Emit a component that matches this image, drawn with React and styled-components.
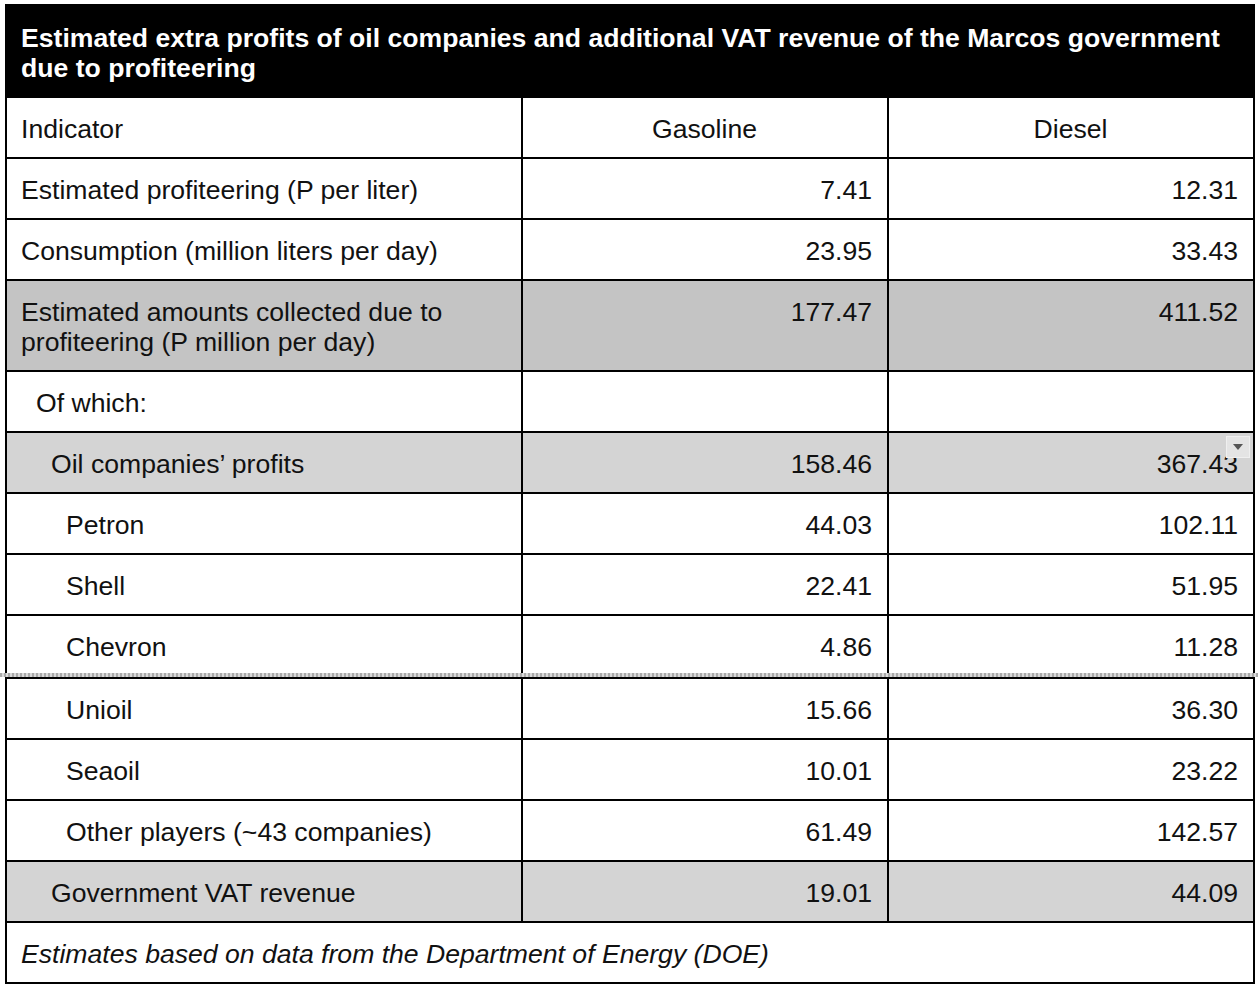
import React from 'react';
import styled, { createGlobalStyle } from 'styled-components';

const GlobalStyle = createGlobalStyle`
  html, body {
    margin: 0;
    padding: 0;
    background: #ffffff;
  }
  body {
    font-family: "Liberation Sans", Arial, Helvetica, sans-serif;
    color: #111111;
  }
`;

const topRows = [
  { label: 'Estimated profiteering (P per liter)', gas: '7.41', diesel: '12.31' },
  { label: 'Consumption (million liters per day)', gas: '23.95', diesel: '33.43' },
  {
    label: 'Estimated amounts collected due to profiteering (P million per day)',
    gas: '177.47',
    diesel: '411.52',
    shade: 'dark',
  },
  { label: 'Of which:', indent: 1, gas: '', diesel: '' },
  { label: 'Oil companies’ profits', indent: 2, gas: '158.46', diesel: '367.43', shade: 'light', menu: true },
  { label: 'Petron', indent: 3, gas: '44.03', diesel: '102.11' },
  { label: 'Shell', indent: 3, gas: '22.41', diesel: '51.95' },
];

const bottomRows = [
  { label: 'Unioil', indent: 3, gas: '15.66', diesel: '36.30' },
  { label: 'Seaoil', indent: 3, gas: '10.01', diesel: '23.22' },
  { label: 'Other players (~43 companies)', indent: 3, gas: '61.49', diesel: '142.57' },
  { label: 'Government VAT revenue', indent: 2, gas: '19.01', diesel: '44.09', shade: 'light' },
];

const shades = { dark: '#c4c4c4', light: '#d4d4d4' };

const DataRow = ({ row, cut }) => (
  <Row $shade={row.shade}>
    <LabelCell $indent={row.indent || 0} $cut={cut}>{row.label}</LabelCell>
    <NumCell $cut={cut}>{row.gas}</NumCell>
    <NumCell $cut={cut}>
      {row.diesel}
      {row.menu && (
        <MenuButton>
          <svg width="12" height="8" viewBox="0 0 12 8">
            <path d="M1 1 L11 1 L6 7 Z" fill="#555555" />
          </svg>
        </MenuButton>
      )}
    </NumCell>
  </Row>
);

const Columns = () => (
  <colgroup>
    <col style={{ width: 518 }} />
    <col style={{ width: 366 }} />
    <col style={{ width: 366 }} />
  </colgroup>
);

const App = () => (
  <Page>
    <GlobalStyle />
    <Table>
      <Columns />
      <tbody>
        <tr>
          <TitleCell colSpan={3}>
            Estimated extra profits of oil companies and additional VAT revenue of the Marcos government
            due to profiteering
          </TitleCell>
        </tr>
        <Row>
          <LabelCell $indent={0}>Indicator</LabelCell>
          <HeadCell>Gasoline</HeadCell>
          <HeadCell>Diesel</HeadCell>
        </Row>
        {topRows.map((row) => (
          <DataRow key={row.label} row={row} />
        ))}
        <DataRow row={{ label: 'Chevron', indent: 3, gas: '4.86', diesel: '11.28' }} cut />
      </tbody>
    </Table>

    <PageBreak />

    <Table $top>
      <Columns />
      <tbody>
        {bottomRows.map((row) => (
          <DataRow key={row.label} row={row} />
        ))}
        <Row>
          <NoteCell colSpan={3}>Estimates based on data from the Department of Energy (DOE)</NoteCell>
        </Row>
      </tbody>
    </Table>
  </Page>
);

export default App;

// Styled Components
const Page = styled.div`
  width: 1258px;
  padding: 4px 3px 4px 5px;
  box-sizing: border-box;
`;

const Table = styled.table`
  width: 1250px;
  table-layout: fixed;
  border-collapse: separate;
  border-spacing: 0;
  font-size: 26.6px;
  line-height: 30px;
  border-top: ${({ $top }) => ($top ? '2px solid #000' : 'none')};
`;

const TitleCell = styled.th`
  background: #000000;
  color: #ffffff;
  font-weight: 700;
  text-align: left;
  padding: 19px 14px 15px 15px;
  border-left: 1px solid #000;
`;

const Row = styled.tr`
  background: ${({ $shade }) => ($shade ? shades[$shade] : '#ffffff')};
`;

const Cell = styled.td`
  box-sizing: border-box;
  padding: ${({ $cut }) => ($cut ? '16px 15px 11px 14px' : '16px 15px 13px 14px')};
  border-right: 2px solid #000;
  border-bottom: ${({ $cut }) => ($cut ? 'none' : '2px solid #000')};
  vertical-align: top;
  position: relative;
`;

const LabelCell = styled(Cell)`
  border-left: 2px solid #000;
  padding-left: ${({ $indent }) => 14 + $indent * 15}px;
`;

const NumCell = styled(Cell)`
  text-align: right;
`;

const HeadCell = styled(Cell)`
  text-align: center;
`;

const NoteCell = styled(Cell)`
  border-left: 2px solid #000;
  font-style: italic;
`;

const MenuButton = styled.div`
  position: absolute;
  top: 3px;
  right: 3px;
  width: 24px;
  height: 22px;
  box-sizing: border-box;
  background: #e4e4e4;
  border: 1px solid #efefef;
  display: flex;
  align-items: flex-start;
  justify-content: center;
  padding-top: 6px;
`;

const PageBreak = styled.div`
  height: 4px;
  margin: 0 -3px 0 -5px;
  background: repeating-linear-gradient(90deg, #a9a9a9 0 2px, #d9d9d9 2px 4px);
`;
